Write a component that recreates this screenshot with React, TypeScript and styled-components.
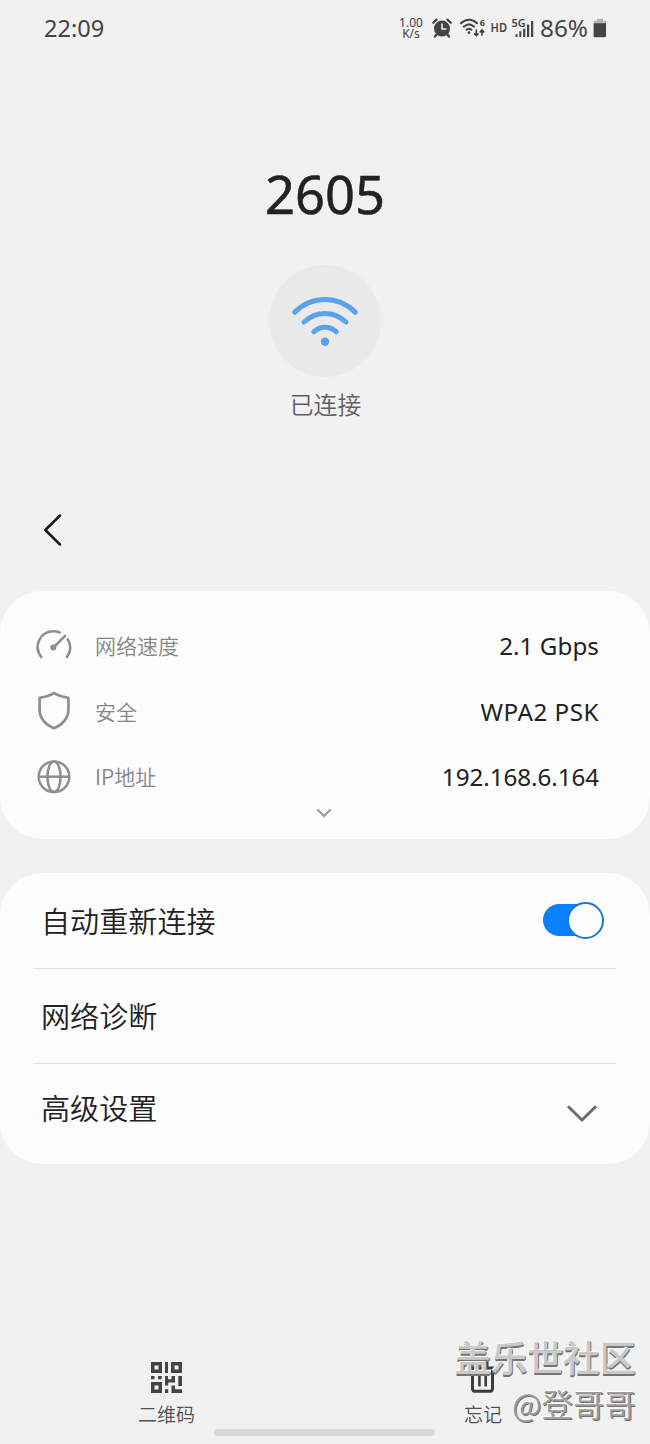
import React from "react";
import styled, { createGlobalStyle } from "styled-components";

const GlobalStyle = createGlobalStyle`
  * { box-sizing: border-box; }
  body {
    margin: 0;
    background: #f1f1f1;
    font-family: "Noto Sans", "Noto Sans CJK SC", sans-serif;
    color: #222;
  }
  svg { display: block; flex: none; overflow: visible; }
`;

const Screen = styled.main`
  position: relative;
  width: 650px;
  height: 1444px;
  overflow: hidden;
  display: flex;
  flex-direction: column;
  background: #f1f1f1;
`;

const StatusBar = styled.header`
  height: 56px;
  flex: none;
  display: flex;
  align-items: center;
  padding: 0 43px 0 44px;
  color: #444;
`;

const Clock = styled.time`
  flex: 1;
  font-size: 23.6px;
  line-height: 56px;
`;

const NetRate = styled.div`
  width: 24px;
  margin-right: 9px;
  font-size: 12px;
  text-align: center;
  white-space: nowrap;
`;

const RateLine = styled.div`
  height: 11px;
  line-height: 11px;
`;

const StatusIcons = styled.div`
  display: flex;
  align-items: center;
  gap: 3px;
`;

const AlarmSlot = styled.span`
  margin-right: 5px;
`;

const BatteryLevel = styled.span`
  margin: 0 2px 0 6px;
  font-size: 24.3px;
  line-height: 56px;
  width: 51px;
`;

const Hero = styled.section`
  height: 418px;
  flex: none;
  display: flex;
  flex-direction: column;
  align-items: center;
`;

const NetworkName = styled.h1`
  margin: 102px 0 0;
  height: 72px;
  font-size: 52.5px;
  font-weight: 400;
  line-height: 72px;
  -webkit-text-stroke: 0.5px #222;
`;

const SignalDisc = styled.div`
  width: 112px;
  height: 112px;
  margin-top: 35px;
  border-radius: 50%;
  background: #eaeaea;
  display: flex;
  align-items: center;
  justify-content: center;
`;

const ConnectionState = styled.p`
  margin: 9px 0 0 1px;
  font-family: "Noto Sans CJK SC", sans-serif;
  font-size: 23.8px;
  font-weight: 350;
  line-height: 36px;
  color: #606060;
`;

const BackRow = styled.nav`
  height: 117px;
  flex: none;
  padding: 38px 0 0 42px;
`;

const BackButton = styled.button`
  display: block;
  border: 0;
  padding: 0;
  background: none;
`;

const Card = styled.section<{ $height: number; $gap?: number }>`
  height: ${(p) => p.$height}px;
  flex: none;
  margin-bottom: ${(p) => p.$gap ?? 0}px;
  border-radius: 42px;
  background: #fcfcfc;
`;

const InfoCard = styled(Card)`
  padding: 22px 51px 0 35px;
`;

const InfoRow = styled.div`
  display: flex;
  align-items: center;
  height: 65.6px;
`;

const InfoLabel = styled.span`
  flex: 1;
  margin: 0 0 1.5px 22px;
  font-family: "Noto Sans CJK SC", sans-serif;
  font-size: 21px;
  font-weight: 350;
  color: #868686;
`;

const InfoValue = styled.span<{ $spacing: number }>`
  font-size: 24.2px;
  letter-spacing: ${(p) => p.$spacing}px;
`;

const Expand = styled.div`
  display: flex;
  justify-content: center;
  margin: -2px 0 0 14px;
`;

const SettingsCard = styled(Card)`
  padding: 0 34px;
`;

const SettingRow = styled.div<{ $height: number; $divided?: boolean }>`
  height: ${(p) => p.$height}px;
  padding: 0 11px 2px 7px;
  display: flex;
  align-items: center;
  justify-content: space-between;
  border-bottom: ${(p) => (p.$divided ? "1px solid #e2e2e2" : "0")};
  font-family: "Noto Sans CJK SC", sans-serif;
  font-size: 29.1px;
  font-weight: 350;
  line-height: 42px;
`;

const LastRow = styled(SettingRow)`
  padding: 0 18px 6px 7px;

  svg { margin-top: 13px; }
`;

const Switch = styled.span`
  width: 62px;
  height: 38px;
  margin-top: 1px;
  display: flex;
  align-items: center;
`;

const SwitchTrack = styled.span`
  width: 58px;
  height: 32px;
  display: flex;
  align-items: center;
  border-radius: 16px;
  background: #0a80fb;
`;

const SwitchThumb = styled.span`
  flex: none;
  width: 37px;
  height: 37px;
  margin-left: 24px;
  border-radius: 50%;
  border: 2px solid #1c79d0;
  background: #fdfdfd;
`;

const BottomBar = styled.footer`
  display: flex;
  justify-content: space-between;
  width: 364px;
  margin: 198px 0 0 138px;
`;

const Action = styled.button`
  border: 0;
  padding: 0;
  background: none;
  display: flex;
  flex-direction: column;
  align-items: center;
  color: #505050;
  font-family: "Noto Sans CJK SC", sans-serif;
  font-size: 19px;
  font-weight: 350;
  line-height: 28px;
  white-space: nowrap;
  gap: 7px;
`;

const HomeIndicator = styled.div`
  position: absolute;
  left: 214px;
  bottom: 8px;
  width: 221px;
  height: 7px;
  border-radius: 4px;
  background: #d8d8d8;
`;

const Watermark = styled.div`
  position: absolute;
  right: 14px;
  bottom: 17px;
  text-align: right;
  white-space: nowrap;
  font-family: "Noto Sans CJK SC", sans-serif;
`;

const WatermarkTitle = styled.div`
  font-size: 36.2px;
  line-height: 48px;
  font-weight: 500;
  color: #c9c9c9;
  text-shadow: -1px -1px 0 #f8f8f8, 1px 1px 0 #747474, 0 2px 0 #747474;
`;

const WatermarkUser = styled.div`
  font-size: 31.5px;
  line-height: 47px;
  font-weight: 350;
  color: #9c9c9c;
  text-shadow: -1px -1px 0 #fafafa, 1px 1px 0 #747474;
`;

const AlarmIcon = () => (
  <svg width="20" height="20" viewBox="0 0 20 20" fill="none" stroke="#444" strokeLinecap="round">
    <circle cx="10" cy="10.6" r="8" fill="#444" stroke="none" />
    <path d="M1.2 4.8 4.6 1.6M18.8 4.8 15.4 1.6M4.5 16.5 3 18.5M15.5 16.5 17 18.5" strokeWidth="2.2" />
    <path d="M10 6v5h4" stroke="#f1f1f1" strokeWidth="1.6" />
  </svg>
);

const StatusWifiIcon = () => (
  <svg width="27" height="20" viewBox="0 0 27 20" fill="none" stroke="#444" strokeWidth="2" strokeLinecap="round">
    <path d="M1 5.3C6 .7 12 .7 17 5.3M3.8 8.7C7 5.8 11 5.8 14.2 8.7M6.5 11.8C8.3 10.3 9.8 10.3 11.5 11.8" />
    <circle cx="9" cy="14.7" r="1.4" fill="#444" stroke="none" />
    <path d="M16.3 12v5M14.6 15.8l1.7 1.8 1.7-1.8M22 17v-4.4M20.3 13.9 22 12.1l1.7 1.8" strokeWidth="1.7" />
    <text x="19.7" y="8.3" fontSize="9" fontWeight="700" fill="#444" stroke="none">6</text>
  </svg>
);

const MobileSignalIcon = () => (
  <svg width="23" height="22" viewBox="0 0 23 22" fill="#444">
    <text x="0.5" y="10" fontSize="11.5" fontWeight="600" textLength="14" lengthAdjust="spacingAndGlyphs">5G</text>
    <path d="M4.5 17.3h2V20h-2zM8.3 14.3h2V20h-2zM12.1 11.8h2.2V20h-2.2zM16 7.5h2.2V20H16zM20 4h2.2v16H20z" />
  </svg>
);

const HdIcon = () => (
  <svg width="18" height="20" viewBox="0 0 18 20" fill="#444">
    <text x="0.5" y="13.5" fontSize="12" fontWeight="600" textLength="16.5" lengthAdjust="spacingAndGlyphs">HD</text>
  </svg>
);

const BatteryIcon = () => (
  <svg width="14" height="20" viewBox="0 0 14 20">
    <path d="M4 .8h6v2h3v4H1v-4h3z" fill="#b5b5b5" />
    <path d="M.6 5.2H13V18a1.2 1.2 0 0 1-1.2 1.2h-10A1.2 1.2 0 0 1 .6 18z" fill="#444" />
  </svg>
);

const WifiIcon = () => (
  <svg width="68" height="54" viewBox="0 0 68 54" fill="none" stroke="#5ba2ec" strokeWidth="5" strokeLinecap="round">
    <path d="M3.7 18.3C21 1.3 47 1.3 64.3 18.3M13 28C25.2 16.5 42.8 16.5 55 28M22.8 37.8C29 31.6 39 31.6 45.2 37.8" />
    <circle cx="34" cy="47.8" r="4.2" fill="#5ba2ec" stroke="none" />
  </svg>
);

const BackIcon = () => (
  <svg width="22" height="36" viewBox="0 0 22 36" fill="none" stroke="#1b1b1b" strokeWidth="2.5" strokeLinecap="round" strokeLinejoin="round">
    <path d="M18 3.5 3.3 18 18 32.5" />
  </svg>
);

const SpeedIcon = () => (
  <svg width="38" height="38" viewBox="0 0 38 38" fill="none" stroke="#8f8f8f" strokeWidth="2.6" strokeLinecap="round">
    <path d="M6.2 30C-2.2 19 5.2 4.2 18.5 4.2c2.2 0 4.3.5 6.2 1.3M32.8 12.4c3.5 5.7 2.8 12.4-.8 17.6" />
    <path d="M18.5 20.5 30 8.8" />
    <circle cx="18.3" cy="20.6" r="3" fill="#8f8f8f" stroke="none" />
  </svg>
);

const ShieldIcon = () => (
  <svg width="38" height="38" viewBox="0 0 38 38" fill="none" stroke="#8f8f8f" strokeWidth="2.7" strokeLinejoin="round">
    <path d="M19 1.2C14.5 3.9 9.5 5.2 4.6 5.8V18C4.6 26 10.5 33 19 36.3 27.5 33 33.4 26 33.4 18V5.8C28.5 5.2 23.5 3.9 19 1.2Z" />
  </svg>
);

const GlobeIcon = () => (
  <svg width="38" height="38" viewBox="0 0 38 38" fill="none" stroke="#8f8f8f" strokeWidth="2.5">
    <circle cx="19" cy="18.7" r="15.3" />
    <ellipse cx="19" cy="18.7" rx="6.6" ry="15.3" />
    <path d="M3.7 18.7h30.6" />
  </svg>
);

const SmallChevron = () => (
  <svg width="16" height="10" viewBox="0 0 16 10" fill="none" stroke="#999" strokeWidth="2">
    <path d="M1.3 1.4 8 8l6.7-6.6" />
  </svg>
);

const LargeChevron = () => (
  <svg width="32" height="20" viewBox="0 0 32 20" fill="none" stroke="#6b6b6b" strokeWidth="3">
    <path d="M2 2.2 16 16 30 2.2" />
  </svg>
);

const QrIcon = () => (
  <svg width="31" height="31" viewBox="0 0 31 31" fill="#444">
    <path fillRule="evenodd" d="M0 0h11v11H0zM3.5 3.5v4h4v-4zM20 0h11v11H20zM23.5 3.5v4h4v-4zM0 20h11v11H0zM3.5 23.5v4h4v-4z" />
    <path d="M14 0h3v11h-3zM0 14h3.5v3.2H0zM7 14h3.7v3.2H7zM14 14h3v3.2h3.5V14H24v6.4h-6.8v3.2H14zM27.3 14H31v10h-3.7zM14 27.3h3.2V31H14zM20.5 23.5H24v3.8h7V31H20.5z" />
  </svg>
);

const TrashIcon = () => (
  <svg width="31" height="31" viewBox="0 0 31 31" fill="none" stroke="#3d3d3d" strokeWidth="3">
    <path d="M2.5 6h25M10 5V1.5h10V5M5.5 6v20.8A2.5 2.5 0 0 0 8 29.3h15a2.5 2.5 0 0 0 2.5-2.5V6" />
    <path d="M12.4 9.5V24.5M18.7 9.5V24.5" strokeWidth="2.6" />
  </svg>
);

const details = [
  { icon: <SpeedIcon />, label: "网络速度", value: "2.1 Gbps", spacing: 0.05 },
  { icon: <ShieldIcon />, label: "安全", value: "WPA2 PSK", spacing: 0.5 },
  { icon: <GlobeIcon />, label: "IP地址", value: "192.168.6.164", spacing: -0.05 },
];

export default function App() {
  return (
    <>
      <GlobalStyle />
      <Screen>
        <StatusBar>
          <Clock>22:09</Clock>
          <NetRate>
            <RateLine>1.00</RateLine>
            <RateLine>K/s</RateLine>
          </NetRate>
          <StatusIcons>
            <AlarmSlot><AlarmIcon /></AlarmSlot>
            <StatusWifiIcon />
            <HdIcon />
            <MobileSignalIcon />
          </StatusIcons>
          <BatteryLevel>86%</BatteryLevel>
          <BatteryIcon />
        </StatusBar>

        <Hero>
          <NetworkName>2605</NetworkName>
          <SignalDisc><WifiIcon /></SignalDisc>
          <ConnectionState>已连接</ConnectionState>
        </Hero>

        <BackRow>
          <BackButton aria-label="返回"><BackIcon /></BackButton>
        </BackRow>

        <InfoCard $height={248} $gap={34}>
          {details.map((d) => (
            <InfoRow key={d.label}>
              {d.icon}
              <InfoLabel>{d.label}</InfoLabel>
              <InfoValue $spacing={d.spacing}>{d.value}</InfoValue>
            </InfoRow>
          ))}
          <Expand><SmallChevron /></Expand>
        </InfoCard>

        <SettingsCard $height={291}>
          <SettingRow $height={96} $divided>
            自动重新连接
            <Switch><SwitchTrack><SwitchThumb /></SwitchTrack></Switch>
          </SettingRow>
          <SettingRow $height={95} $divided>网络诊断</SettingRow>
          <LastRow $height={92}>高级设置<LargeChevron /></LastRow>
        </SettingsCard>

        <BottomBar>
          <Action><QrIcon />二维码</Action>
          <Action><TrashIcon />忘记</Action>
        </BottomBar>

        <HomeIndicator />
        <Watermark>
          <WatermarkTitle>盖乐世社区</WatermarkTitle>
          <WatermarkUser>@登哥哥</WatermarkUser>
        </Watermark>
      </Screen>
    </>
  );
}
